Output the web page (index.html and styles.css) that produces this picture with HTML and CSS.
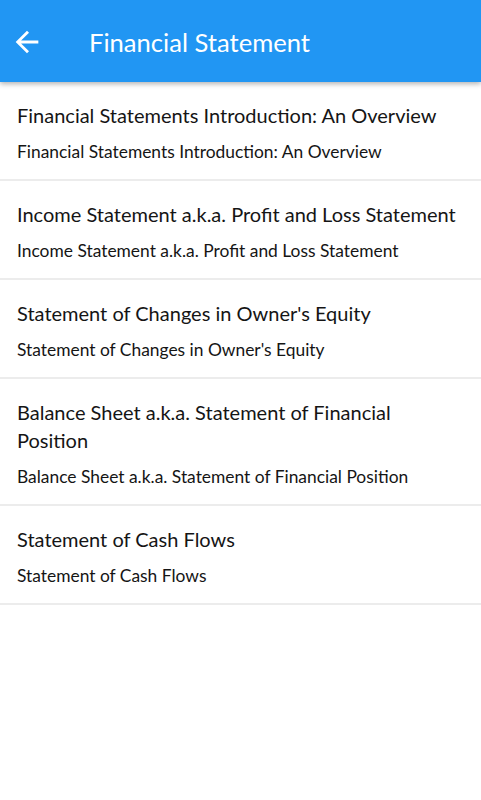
FILE: index.html
```html
<!DOCTYPE html>
<html>
<head>
<meta charset="utf-8">
<link rel="stylesheet" href="styles.css">
</head>
<body>
<header class="appbar">
  <svg class="back" viewBox="0 0 24 24"><path d="M20 11H7.83l5.59-5.59L12 4l-8 8 8 8 1.41-1.41L7.83 13H20v-2z" fill="#fff"/></svg>
  <h1 class="title">Financial Statement</h1>
</header>
<ul class="list">
  <li class="item"><div class="item-title">Financial Statements Introduction: An Overview</div><div class="item-sub">Financial Statements Introduction: An Overview</div></li>
  <li class="item"><div class="item-title">Income Statement a.k.a. Profit and Loss Statement</div><div class="item-sub">Income Statement a.k.a. Profit and Loss Statement</div></li>
  <li class="item"><div class="item-title">Statement of Changes in Owner's Equity</div><div class="item-sub">Statement of Changes in Owner's Equity</div></li>
  <li class="item"><div class="item-title">Balance Sheet a.k.a. Statement of Financial Position</div><div class="item-sub">Balance Sheet a.k.a. Statement of Financial Position</div></li>
  <li class="item"><div class="item-title">Statement of Cash Flows</div><div class="item-sub">Statement of Cash Flows</div></li>
</ul>
</body>
</html>
```
FILE: styles.css
```css
html, body { margin: 0; padding: 0; background: #fff; }
body { font-family: Lato, "Open Sans", sans-serif; color: #151515; width: 481px; }
.appbar {
  height: 82px;
  background: #2196f3;
  display: flex;
  align-items: center;
  padding-left: 10px;
  box-shadow: 0 2px 5px rgba(0,0,0,0.3);
  position: relative;
  z-index: 1;
}
.back { width: 34px; height: 34px; flex: none; margin-top: 2px; }
.title {
  margin: 2px 0 0 45px;
  font-size: 25.6px;
  font-weight: 400;
  color: #fff;
}
.list { list-style: none; margin: 0; padding: 0; }
.item {
  padding: 19px 16px 15px 17px;
  border-bottom: 2px solid #ececec;
  display: flex;
  flex-direction: column;
  gap: 11px;
}
.item-title { font-size: 20px; line-height: 28px; }
.item-sub { font-size: 17.4px; line-height: 24px; }
```
